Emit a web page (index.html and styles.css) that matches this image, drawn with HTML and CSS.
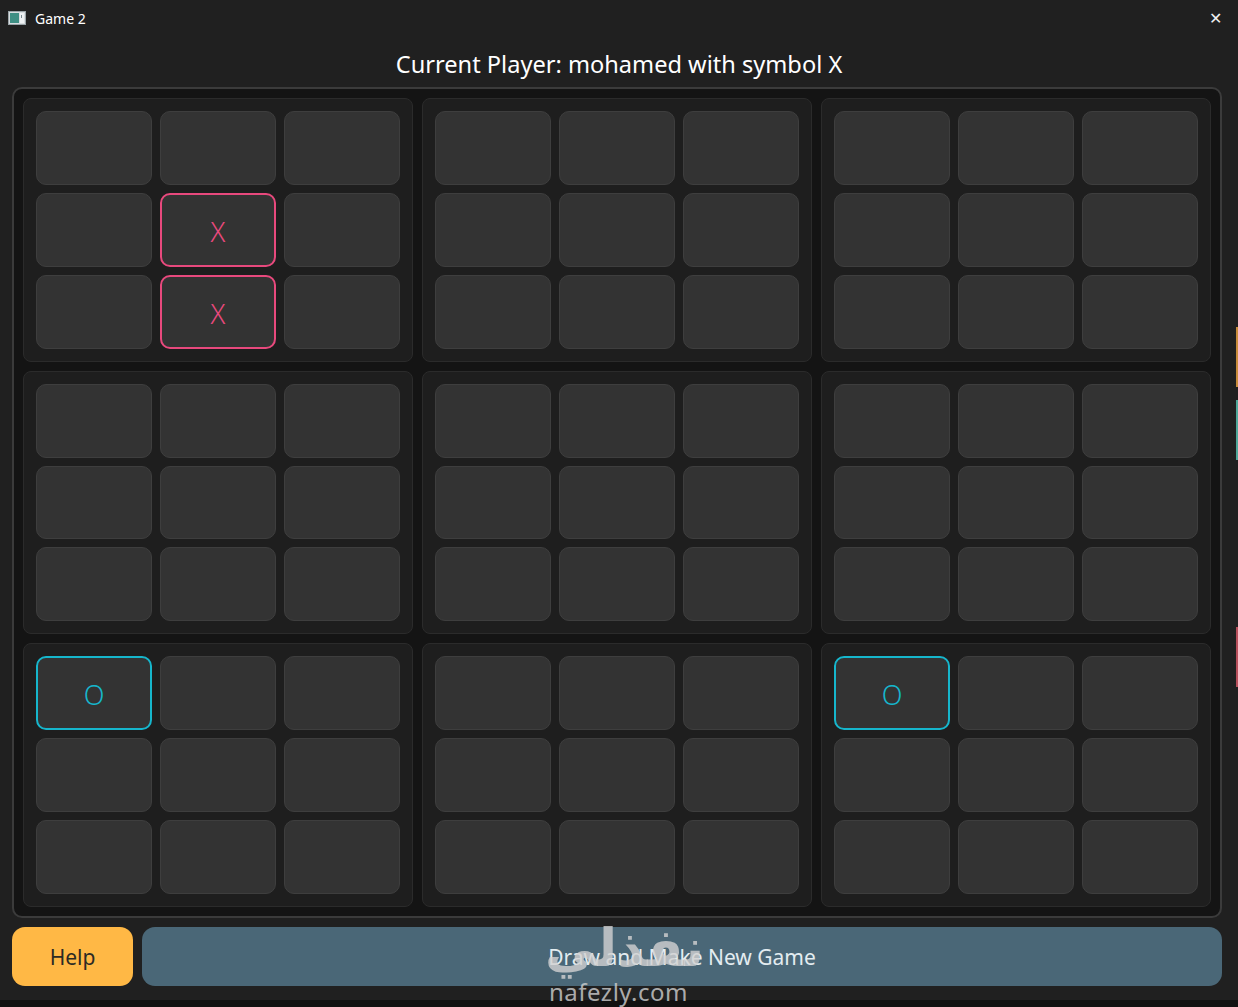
FILE: index.html
```html
<!DOCTYPE html>
<html lang="en">
<head>
    <meta charset="UTF-8">
    <title>Game 2</title>
    <link rel="stylesheet" href="styles.css">
</head>
<body>
    <div class="window">
        <div class="titlebar">
            <svg class="app-icon" width="18" height="14" viewBox="0 0 18 14">
                <rect x="0.5" y="0.5" width="17" height="13" fill="#d8dde0" stroke="#9aa4a8"/>
                <rect x="2" y="2" width="9" height="10" fill="#3f8f84"/>
                <rect x="12" y="2" width="4" height="10" fill="#eef2f4"/>
                <rect x="13" y="4" width="1" height="3" fill="#7a8a90"/>
            </svg>
            <span class="title">Game 2</span>
            <span class="close">&#x2715;</span>
        </div>

        <h1 class="status">Current Player: mohamed with symbol X</h1>

        <div class="board" id="board"></div>

        <div class="actions">
            <button class="btn help">Help</button>
            <button class="btn new-game">Draw and Make New Game</button>
        </div>

        <div class="watermark">
            <div class="wm-ar">نفذلي</div>
            <div class="wm-en">nafezly.com</div>
        </div>
    </div>

    <div class="edge orange"></div>
    <div class="edge teal"></div>
    <div class="edge red"></div>

    <script>
        // marked cells: [board, cell] -> symbol
        const marks = {
            '0-4': 'X',
            '0-7': 'X',
            '6-0': 'O',
            '8-0': 'O'
        };

        const board = document.getElementById('board');
        for (let b = 0; b < 9; b++) {
            const sub = document.createElement('div');
            sub.className = 'sub-board';
            for (let c = 0; c < 9; c++) {
                const cell = document.createElement('div');
                cell.className = 'cell';
                const mark = marks[b + '-' + c];
                if (mark) {
                    cell.classList.add(mark === 'X' ? 'x' : 'o');
                    cell.textContent = mark;
                }
                sub.appendChild(cell);
            }
            board.appendChild(sub);
        }
    </script>
</body>
</html>
```

FILE: styles.css
```css
* {
    box-sizing: border-box;
}
body {
    margin: 0;
    background: #111111;
    font-family: "Noto Sans", "Open Sans", sans-serif;
    width: 1238px;
    height: 1007px;
    overflow: hidden;
    position: relative;
}
.window {
    height: 1000px;
    background: #202020;
    position: relative;
    display: flex;
    flex-direction: column;
}
.titlebar {
    height: 36px;
    display: flex;
    align-items: center;
    padding: 0 8px;
    color: #ffffff;
    font-size: 14px;
}
.app-icon {
    margin-right: 9px;
}
.title {
    flex: 1;
}
.close {
    font-size: 16px;
    margin-right: 8px;
    color: #f0f0f0;
}
.status {
    margin: 13px 0 8px;
    height: 30px;
    line-height: 30px;
    text-align: center;
    font-weight: normal;
    font-size: 23.6px;
    color: #ffffff;
}
.board {
    margin: 0 16px 0 12px;
    height: 831px;
    border: 2px solid #3b3b3b;
    border-radius: 10px;
    background: #141414;
    padding: 9px;
    display: grid;
    grid-template-columns: repeat(3, 1fr);
    grid-template-rows: repeat(3, 1fr);
    gap: 9px;
}
.sub-board {
    background: #1e1e1e;
    border: 1px solid #2b2b2b;
    border-radius: 8px;
    padding: 12px 12px 12px 12px;
    display: grid;
    grid-template-columns: repeat(3, 1fr);
    grid-template-rows: repeat(3, 1fr);
    gap: 8px;
}
.cell {
    background: #333333;
    border: 1px solid #3e3e3e;
    border-radius: 10px;
    display: flex;
    align-items: center;
    justify-content: center;
    font-size: 27px;
    font-weight: 300;
    padding-top: 3px;
}
.cell.x {
    border: 2px solid #e8497d;
    color: #e8497d;
}
.cell.o {
    border: 2px solid #16b6cc;
    color: #16b6cc;
}
.actions {
    display: flex;
    gap: 9px;
    margin: 9px 16px 0 12px;
    height: 59px;
}
.btn {
    border: none;
    border-radius: 13px;
    font-family: "Noto Sans", "Open Sans", sans-serif;
    font-size: 21px;
    padding: 0;
}
.help {
    width: 121px;
    background: #ffb845;
    color: #2c2a24;
}
.new-game {
    flex: 1;
    background: #4a6777;
    color: #e3ecf0;
}
.watermark {
    position: absolute;
    left: 545px;
    top: 918px;
    color: rgba(210, 210, 210, 0.8);
    text-align: left;
    pointer-events: none;
}
.wm-ar {
    font-family: "DejaVu Sans", sans-serif;
    font-weight: bold;
    font-size: 52px;
    line-height: 60px;
    height: 62px;
}
.wm-en {
    font-family: "Noto Sans", sans-serif;
    font-size: 24px;
    line-height: 24px;
    margin-left: 4px;
    letter-spacing: 0.5px;
}
.edge {
    position: absolute;
    right: 0;
    width: 2px;
    height: 60px;
}
.edge.orange {
    top: 327px;
    background: #c98d3c;
}
.edge.teal {
    top: 400px;
    background: #4fa89a;
}
.edge.red {
    top: 627px;
    background: #b8505c;
}
```
